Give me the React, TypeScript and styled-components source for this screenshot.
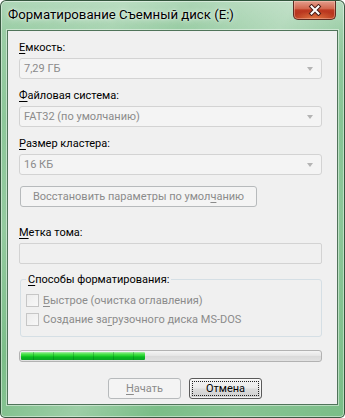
import React from 'react';
import styled, { createGlobalStyle } from 'styled-components';

const GlobalStyle = createGlobalStyle`
  html, body {
    margin: 0;
    padding: 0;
    background: #ffffff;
  }
  body {
    font-family: Roboto, "Open Sans", "Noto Sans", sans-serif;
    font-size: 11px;
  }
`;

const Window = styled.div`
  position: relative;
  box-sizing: border-box;
  width: 345px;
  height: 418px;
  display: flex;
  flex-direction: column;
  padding: 0 6px 12px 6px;
  border: 1px solid rgba(38, 66, 46, 0.85);
  border-radius: 6px 6px 5px 5px;
  background:
    linear-gradient(118deg, rgba(255, 255, 255, 0) 0%, rgba(255, 255, 255, 0.16) 22%, rgba(255, 255, 255, 0) 34%,
      rgba(255, 255, 255, 0.26) 52%, rgba(255, 255, 255, 0) 66%, rgba(255, 255, 255, 0.1) 80%, rgba(255, 255, 255, 0) 100%),
    linear-gradient(180deg, #add6b6 0px, #98cca3 30px, #82c290 120px, #7abd87 100%);
  box-shadow: inset 0 0 0 1px rgba(255, 255, 255, 0.45);
`;

const TitleBar = styled.div`
  height: 29px;
  display: flex;
  align-items: flex-start;
`;

const Title = styled.div`
  padding: 6px 0 0 1px;
  line-height: 16px;
  font-size: 13.2px;
  color: #000;
  text-shadow: 0 0 6px rgba(255, 255, 255, 0.9), 0 0 2px rgba(255, 255, 255, 0.8);
`;

const CloseButton = styled.div`
  margin-left: auto;
  margin-right: 2px;
  box-sizing: border-box;
  width: 43px;
  height: 19px;
  display: flex;
  align-items: center;
  justify-content: center;
  border: 1px solid #5e2b22;
  border-top: none;
  border-radius: 0 0 5px 5px;
  background:
    radial-gradient(ellipse 60% 45% at 50% 100%, rgba(255, 160, 90, 0.65), rgba(255, 160, 90, 0) 100%),
    linear-gradient(180deg, #e39e8d 0%, #d2684f 42%, #bd3a22 50%, #b02e18 100%);
  box-shadow: inset 0 0 0 1px rgba(255, 210, 195, 0.4);
`;

const Client = styled.div`
  flex: 1;
  display: flex;
  flex-direction: column;
  padding: 9px 15px 0 11px;
  border: 1px solid #50745a;
  background: #f0f0f0;
  box-shadow: 0 0 0 1px rgba(255, 255, 255, 0.45);
`;

const Label = styled.div<{ $mt?: number }>`
  margin-top: ${(p) => p.$mt ?? 0}px;
  margin-bottom: 3px;
  height: 15px;
  line-height: 15px;
  color: #000;
  white-space: nowrap;
`;

const Key = styled.span`
  text-decoration: underline;
  text-underline-offset: 2px;
  text-decoration-thickness: 1px;
`;

const Combo = styled.div`
  box-sizing: border-box;
  height: 21px;
  margin-bottom: 9px;
  display: flex;
  align-items: center;
  justify-content: space-between;
  padding: 0 8px 0 4px;
  border: 1px solid #d3d3d3;
  border-radius: 3px;
  background: #f4f4f4;
  color: #8b8b8b;
`;

const Arrow = styled.span`
  width: 0;
  height: 0;
  border-left: 3.5px solid transparent;
  border-right: 3.5px solid transparent;
  border-top: 4px solid #b4b4b4;
`;

const DisabledButton = styled.div<{ $width: number }>`
  box-sizing: border-box;
  width: ${(p) => p.$width}px;
  height: 21px;
  display: flex;
  align-items: center;
  justify-content: center;
  border: 1px solid #b7babc;
  border-radius: 3px;
  background: #f4f4f4;
  color: #8b8b8b;
  white-space: nowrap;
`;

const RestoreRow = styled.div`
  margin-top: 2px;
  padding-left: 1px;
`;

const TextInput = styled.div`
  box-sizing: border-box;
  height: 21px;
  border: 1px solid #d3d3d3;
  border-radius: 2px;
  background: #f0f0f0;
`;

const Group = styled.fieldset`
  margin: 8px 0 0 1px;
  padding: 4px 0 7px 5px;
  border: 1px solid #d5dfe5;
  border-radius: 3px;
`;

const Legend = styled.legend`
  margin-left: 0;
  padding: 0 2px;
  line-height: 15px;
  color: #000;
`;

const CheckRow = styled.div`
  height: 19px;
  display: flex;
  align-items: center;
  gap: 4px;
  color: #8b8b8b;
`;

const CheckBox = styled.span`
  box-sizing: border-box;
  width: 13px;
  height: 13px;
  border: 1px solid #c6c6c6;
  background: linear-gradient(135deg, #ececec, #f8f8f8);
`;

const Progress = styled.div`
  box-sizing: border-box;
  margin-top: 13px;
  height: 12px;
  padding: 1px;
  border: 1px solid #b2b2b2;
  border-radius: 3px;
  background: linear-gradient(180deg, #f4f4f4 0%, #e6e6e6 45%, #dadada 55%, #e2e2e2 100%);
  overflow: hidden;
`;

const ProgressFill = styled.div`
  height: 100%;
  border-radius: 1px;
  background:
    repeating-linear-gradient(90deg, rgba(0, 0, 0, 0) 0 12px, rgba(0, 90, 20, 0.28) 12px 13px, rgba(0, 0, 0, 0) 13px 20px),
    linear-gradient(180deg, #a8f0a8 0%, #4ee14e 25%, #1fd42c 50%, #09bb1f 60%, #0aa623 100%);
`;

const ButtonRow = styled.div`
  margin-top: 16px;
  padding-left: 89px;
  display: flex;
  gap: 8px;
`;

const DefaultButton = styled.div`
  box-sizing: border-box;
  width: 73px;
  height: 21px;
  padding: 2px;
  border: 1px solid #5a5a5a;
  border-radius: 3px;
  background: linear-gradient(180deg, #f3f3f3 0%, #ebebeb 48%, #dcdcdc 52%, #cfcfcf 100%);
  box-shadow: inset 0 0 0 1px rgba(255, 255, 255, 0.7);
  color: #000;
`;

const FocusRing = styled.div`
  box-sizing: border-box;
  height: 100%;
  display: flex;
  align-items: center;
  justify-content: center;
  border: 1px dotted #222;
`;

const CloseGlyph = () => (
  <svg width="14" height="12" viewBox="0 0 14 12">
    <path d="M3.5 2.5 L10.5 9.5 M10.5 2.5 L3.5 9.5" stroke="#4a1f18" strokeWidth="4" strokeLinecap="square" />
    <path d="M3.5 2.5 L10.5 9.5 M10.5 2.5 L3.5 9.5" stroke="#ffffff" strokeWidth="2" strokeLinecap="square" />
  </svg>
);

const progress = 0.415;

export default function App() {
  return (
    <>
      <GlobalStyle />
      <Window>
        <TitleBar>
          <Title>Форматирование Съемный диск (E:)</Title>
          <CloseButton>
            <CloseGlyph />
          </CloseButton>
        </TitleBar>
        <Client>
          <Label>
            <Key>Е</Key>мкость:
          </Label>
          <Combo>
            7,29 ГБ
            <Arrow />
          </Combo>
          <Label>
            <Key>Ф</Key>айловая система:
          </Label>
          <Combo>
            FAT32 (по умолчанию)
            <Arrow />
          </Combo>
          <Label>
            <Key>Р</Key>азмер кластера:
          </Label>
          <Combo>
            16 КБ
            <Arrow />
          </Combo>
          <RestoreRow>
            <DisabledButton $width={237}>
              Восстановить параметры по умол<Key>ч</Key>анию
            </DisabledButton>
          </RestoreRow>
          <Label $mt={18}>
            <Key>М</Key>етка тома:
          </Label>
          <TextInput />
          <Group>
            <Legend>
              <Key>С</Key>пособы форматирования:
            </Legend>
            <CheckRow>
              <CheckBox />
              <span>
                <Key>Б</Key>ыстрое (очистка оглавления)
              </span>
            </CheckRow>
            <CheckRow>
              <CheckBox />
              <span>
                Создание за<Key>г</Key>рузочного диска MS-DOS
              </span>
            </CheckRow>
          </Group>
          <Progress>
            <ProgressFill style={{ width: `${progress * 100}%` }} />
          </Progress>
          <ButtonRow>
            <DisabledButton $width={73}>
              <Key>Н</Key>ачать
            </DisabledButton>
            <DefaultButton>
              <FocusRing>Отмена</FocusRing>
            </DefaultButton>
          </ButtonRow>
        </Client>
      </Window>
    </>
  );
}
